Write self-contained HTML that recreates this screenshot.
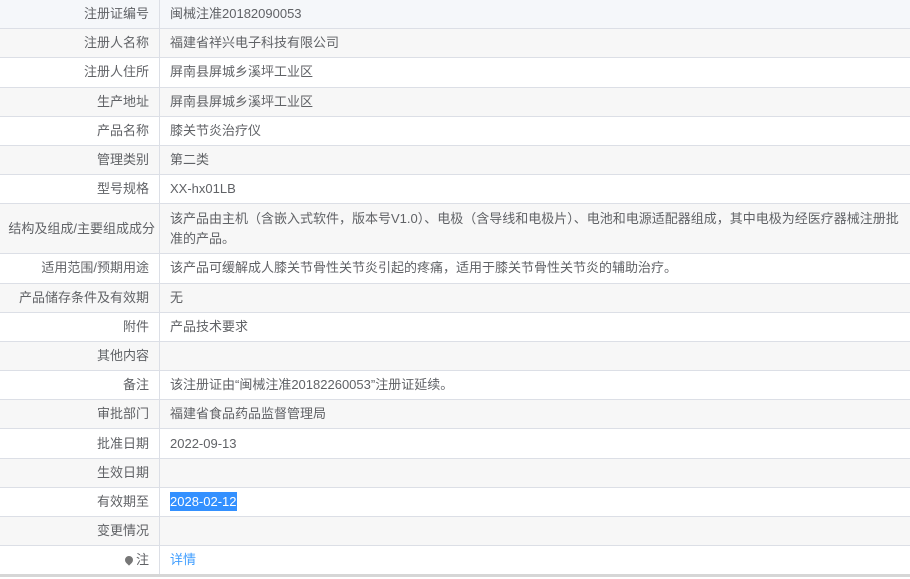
<!DOCTYPE html>
<html><head><meta charset="utf-8"><style>
html,body{margin:0;padding:0;background:#fff;}
body{width:910px;height:579px;overflow:hidden;font-family:"Liberation Sans","Noto Sans CJK SC",sans-serif;font-size:13px;color:#606266;}
table{border-collapse:collapse;width:910px;table-layout:fixed;margin-top:0;}
td{border-bottom:1px solid #dcdfe6;height:28.2px;padding:0 10px;line-height:20px;vertical-align:middle;}
td.l{width:139px;text-align:right;border-right:1px solid #dcdfe6;}
tr.g td{background:#f7f7f7;}
tr.h td{background:#f5f7fa;}
tr.t td{height:49px;}
tr.last td{border-bottom:3px solid #d6d6d6;}
.sel{background:#3390ff;color:#fff;padding:2px 0;}
a{color:#409eff;text-decoration:none;}
.pin{display:inline-block;width:8px;height:8px;border-radius:50% 50% 50% 0;background:#777;transform:rotate(-45deg);margin-right:3px;vertical-align:0px;}
</style></head><body>
<table>
<tr class="h"><td class="l">注册证编号</td><td>闽械注准20182090053</td></tr>
<tr class="g"><td class="l">注册人名称</td><td>福建省祥兴电子科技有限公司</td></tr>
<tr><td class="l">注册人住所</td><td>屏南县屏城乡溪坪工业区</td></tr>
<tr class="g"><td class="l">生产地址</td><td>屏南县屏城乡溪坪工业区</td></tr>
<tr><td class="l">产品名称</td><td>膝关节炎治疗仪</td></tr>
<tr class="g"><td class="l">管理类别</td><td>第二类</td></tr>
<tr><td class="l">型号规格</td><td>XX-hx01LB</td></tr>
<tr class="g t"><td class="l" style="padding:0 4px 0 0;width:155px">结构及组成/主要组成成分</td><td>该产品由主机（含嵌入式软件，版本号V1.0）、电极（含导线和电极片）、电池和电源适配器组成，其中电极为经医疗器械注册批准的产品。</td></tr>
<tr><td class="l">适用范围/预期用途</td><td>该产品可缓解成人膝关节骨性关节炎引起的疼痛，适用于膝关节骨性关节炎的辅助治疗。</td></tr>
<tr class="g"><td class="l">产品储存条件及有效期</td><td>无</td></tr>
<tr><td class="l">附件</td><td>产品技术要求</td></tr>
<tr class="g"><td class="l">其他内容</td><td></td></tr>
<tr><td class="l">备注</td><td>该注册证由“闽械注准20182260053”注册证延续。</td></tr>
<tr class="g"><td class="l">审批部门</td><td>福建省食品药品监督管理局</td></tr>
<tr><td class="l">批准日期</td><td>2022-09-13</td></tr>
<tr class="g"><td class="l">生效日期</td><td></td></tr>
<tr><td class="l">有效期至</td><td><span class="sel">2028-02-12</span></td></tr>
<tr class="g"><td class="l">变更情况</td><td></td></tr>
<tr class="last"><td class="l"><span class="pin"></span>注</td><td><a>详情</a></td></tr>
</table>
</body></html>
